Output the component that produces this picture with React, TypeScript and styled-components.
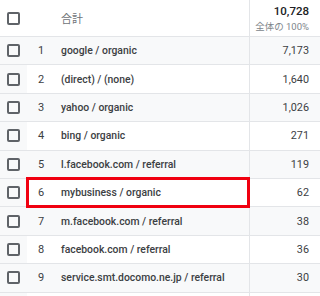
import React from "react";
import styled, { createGlobalStyle } from "styled-components";

const Global = createGlobalStyle`
  html, body { margin: 0; padding: 0; background: #fff; }
  body { font-family: Roboto, "Noto Sans CJK JP", sans-serif; }
`;

const Table = styled.div`
  position: relative;
  width: 320px;
  height: 296px;
  overflow: hidden;
  background: #fff;
`;

const Row = styled.div<{ $shade?: boolean; $header?: boolean }>`
  display: grid;
  grid-template-columns: 27px 34px 188px 71px;
  height: ${(p) => (p.$header ? "37px" : "28.4px")};
  box-sizing: border-box;
  border-bottom: 1px solid #e3e5e8;
  background: ${(p) => (p.$shade ? "#f8f9fa" : "#fff")};
`;

const CheckCell = styled.div<{ $header?: boolean }>`
  display: flex;
  align-items: center;
  justify-content: center;
  background: ${(p) => (p.$header ? "#fff" : "#f8f9fa")};
`;

const Box = styled.div`
  width: 13px;
  height: 13px;
  box-sizing: border-box;
  border: 2px solid #5f6368;
  border-radius: 2px;
`;

const Num = styled.div`
  display: flex;
  align-items: center;
  padding-left: 11px;
  font-size: 11px;
  color: #3c4043;
`;

const Label = styled.div<{ $header?: boolean }>`
  display: flex;
  align-items: center;
  font-size: ${(p) => (p.$header ? "11px" : "10.4px")};
  font-weight: ${(p) => (p.$header ? 400 : 500)};
  color: ${(p) => (p.$header ? "#6f7378" : "#3c4043")};
  white-space: nowrap;
`;

const Value = styled.div`
  display: flex;
  flex-direction: column;
  align-items: flex-end;
  justify-content: center;
  border-left: 1px solid #e3e5e8;
  padding-right: 11px;
  font-size: 10.8px;
  color: #3c4043;
`;

const Total = styled.div`
  font-size: 11.5px;
  font-weight: 500;
  color: #202124;
  line-height: 14px;
`;

const Sub = styled.div`
  font-size: 9.5px;
  color: #80868b;
  line-height: 12px;
  margin-top: 3px;
`;

const Highlight = styled.div`
  position: absolute;
  left: 26px;
  top: 177px;
  width: 224px;
  height: 31px;
  box-sizing: border-box;
  border: 3px solid #f00010;
  pointer-events: none;
`;

const rows: [string, string][] = [
  ["google / organic", "7,173"],
  ["(direct) / (none)", "1,640"],
  ["yahoo / organic", "1,026"],
  ["bing / organic", "271"],
  ["l.facebook.com / referral", "119"],
  ["mybusiness / organic", "62"],
  ["m.facebook.com / referral", "38"],
  ["facebook.com / referral", "36"],
  ["service.smt.docomo.ne.jp / referral", "30"],
  ["", ""],
];

export default function App() {
  return (
    <Table>
      <Global />
      <Row $header>
        <CheckCell $header>
          <Box />
        </CheckCell>
        <Num />
        <Label $header>合計</Label>
        <Value>
          <Total>10,728</Total>
          <Sub>全体の 100%</Sub>
        </Value>
      </Row>
      {rows.map(([name, v], i) => (
        <Row key={i} $shade={i % 2 === 0}>
          <CheckCell>
            <Box />
          </CheckCell>
          <Num>{name ? i + 1 : ""}</Num>
          <Label>{name}</Label>
          <Value>{v}</Value>
        </Row>
      ))}
      <Highlight />
    </Table>
  );
}
